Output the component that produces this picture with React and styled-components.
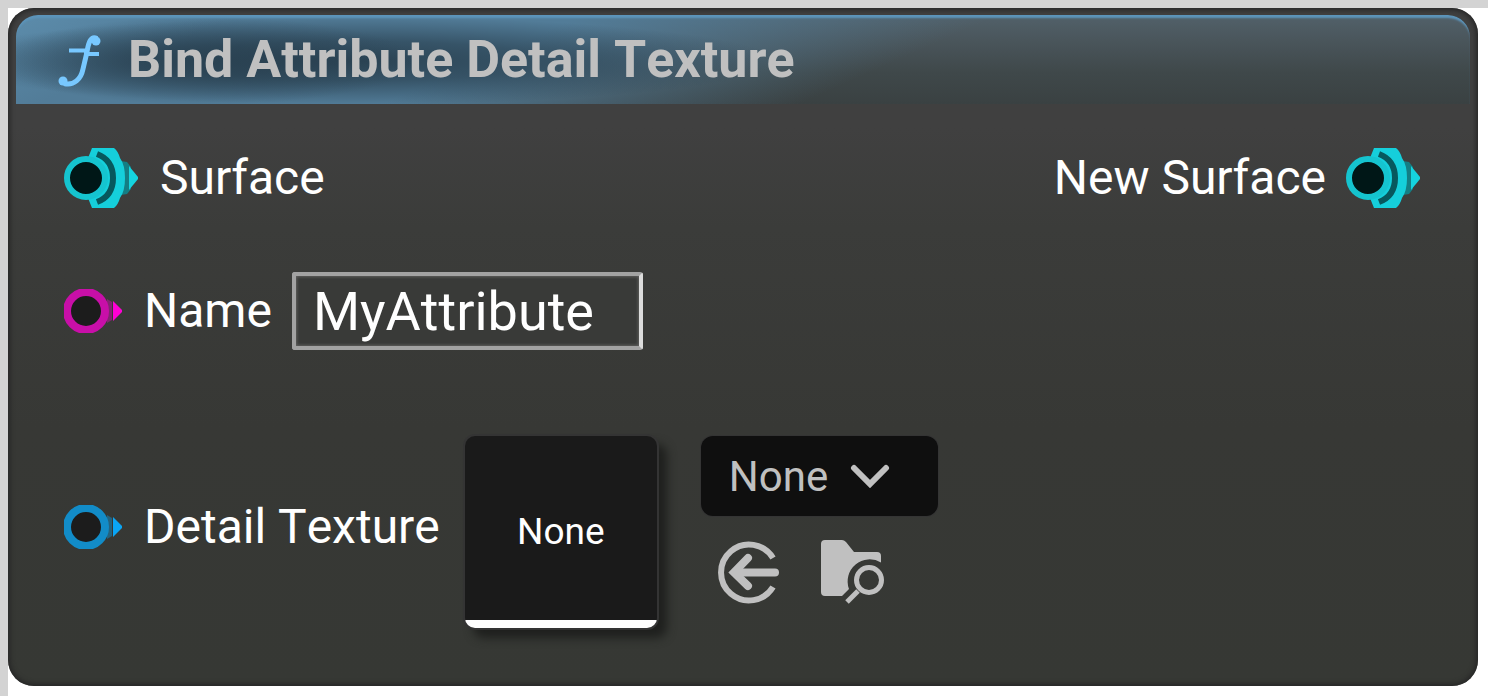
import React from "react";
import styled, { createGlobalStyle } from "styled-components";

const Global = createGlobalStyle`
  *, *::before, *::after { box-sizing: border-box; }
  body {
    margin: 0;
    background: #fff;
    font-family: Roboto, "Liberation Sans", sans-serif;
    font-kerning: none;
    color: #fff;
  }
`;

const Canvas = styled.main`
  min-height: 100vh;
  padding: 0 10px 10px 0;
  border-top: 8px solid #d3d3d3;
  border-left: 8px solid #d3d3d3;
`;

const Node = styled.section`
  padding: 7px 8px 0;
  border-radius: 26px;
  background: linear-gradient(#404040 0, #404040 120px, #3b3c3a 220px, #373835 420px, #363834 100%);
  box-shadow: inset 0 0 5px 2px #262626;
`;

const Header = styled.header`
  display: flex;
  align-items: center;
  gap: 26px;
  height: 89px;
  padding: 0 40px;
  border-radius: 22px 22px 0 0;
  box-shadow: inset 0 4px 2px -1px #5c94ba;
  background:
    radial-gradient(ellipse 210px 44px at 190px 46px, #263c4bb0 0, #263c4b90 35%, #263c4b00 100%),
    radial-gradient(ellipse 420px 44px at 340px 46px, #263c4be0 0, #263c4ba0 45%, #263c4b00 100%),
    linear-gradient(156deg, #5c8cab 0, #527c98 90px, #527c98 230px, #527c9800 400px),
    linear-gradient(#52616a 0, #485358 35%, #3f484a 65%, #3a4142 100%);
`;

const Title = styled.h1`
  margin: 0;
  font-size: 52px;
  line-height: 64px;
  font-weight: 700;
  color: #c0c0c0;
  white-space: nowrap;
`;

const Body = styled.div`
  display: flex;
  flex-direction: column;
  padding: 44px 48px 58px;
`;

const Row = styled.div`
  display: flex;
  align-items: center;
  justify-content: space-between;
  margin-top: ${(p) => p.$space || 0}px;
`;

const Port = styled.div`
  display: flex;
  align-items: center;
  gap: 20px;
`;

const Label = styled.label`
  font-size: 48px;
  line-height: 60px;
  white-space: nowrap;
`;

const PinSvg = styled.svg`
  display: block;
  flex: none;
`;

const NameInput = styled.input`
  width: 351px;
  height: 78px;
  padding: 0 17px;
  border: 4px solid #a2a2a2;
  border-right-color: #dcdcdc;
  border-radius: 3px;
  outline: 0;
  background: #393a38;
  box-shadow: inset 0 0 3px 1px #60605f;
  color: #fff;
  font: 400 54px/64px Roboto, sans-serif;
  font-kerning: none;
`;

const Asset = styled.div`
  display: flex;
  align-items: flex-start;
  gap: 44px;
  padding-top: 10px;
  margin-left: 5px;
`;

const Thumbnail = styled.div`
  display: grid;
  place-items: center;
  width: 192px;
  height: 192px;
  border-radius: 10px;
  background: linear-gradient(#1a1a1a 184px, #fff 184px);
  box-shadow: 0 0 0 2px #343434, 9px 9px 10px 1px #1f201e;
  font-size: 37px;
  line-height: 44px;
`;

const Controls = styled.div`
  display: flex;
  flex-direction: column;
  gap: 24px;
`;

const Picker = styled.div`
  display: grid;
  align-items: center;
  width: 237px;
`;

const Select = styled.select`
  grid-area: 1 / 1;
  appearance: none;
  width: 100%;
  height: 80px;
  padding: 2px 28px 0;
  border: 0;
  border-radius: 12px;
  background: #0f0f0f;
  box-shadow: 0 0 0 1px #343434;
  color: #c0c0c0;
  font: 400 42px/50px Roboto, sans-serif;
  font-kerning: none;
`;

const Chevron = styled.svg`
  grid-area: 1 / 1;
  justify-self: end;
  margin-right: 48px;
  pointer-events: none;
`;

const Actions = styled.div`
  display: flex;
  gap: 39px;
  padding-left: 16px;
`;

const IconButton = styled.button`
  display: block;
  width: 64px;
  height: 66px;
  padding: 0;
  border: 0;
  background: none;
  color: #c0c0c0;
`;

const FunctionIcon = () => (
  <svg width="46" height="54" viewBox="0 0 46 54" fill="none" stroke="#78c8ff" aria-hidden="true">
    <path d="M41 5.500C35 2.500 32.500 9 31 19L27 36C25 46 18 53 8 50.500" strokeWidth="5" />
    <path d="M13 17.500H31M28 21H43" strokeWidth="4" />
    <circle cx="40" cy="8" r="4.500" fill="#78c8ff" stroke="none" />
    <circle cx="7" cy="48" r="4.500" fill="#78c8ff" stroke="none" />
  </svg>
);

const StructPin = () => (
  <PinSvg width="76" height="60" viewBox="0 0 76 60" aria-hidden="true">
    <path d="M57 13L63 14L67 19V41L63 46L57 47Z" fill="#147e84" />
    <path d="M28 0H50Q54 3 56 10Q61 17 61 30Q61 43 56 50Q54 57 50 60H28L24 50V10Z" fill="#15cfdb" />
    <path d="M33 6Q49 12 49 30Q49 48 33 54" fill="none" stroke="#07585d" strokeWidth="6" />
    <circle cx="22" cy="30" r="19" fill="#001717" stroke="#15c4cf" strokeWidth="6" />
    <path d="M65 18L74 29V31L65 42Z" fill="#15d4df" />
  </PinSvg>
);

const Pin = ({ color, tip }) => (
  <PinSvg width="60" height="44" viewBox="0 0 60 44" aria-hidden="true">
    <circle cx="22" cy="22" r="19" fill="#1c1c1c" stroke={color} strokeWidth="8" />
    <path d="M43 10L48 13V31L43 34Z" fill={color} opacity="0.5" />
    <path d="M49 12L58 21V23L49 32Z" fill={tip} />
  </PinSvg>
);

export default function App() {
  return (
    <>
      <Global />
      <Canvas>
        <Node>
          <Header>
            <FunctionIcon />
            <Title>Bind Attribute Detail Texture</Title>
          </Header>
          <Body>
            <Row>
              <Port>
                <StructPin />
                <Label as="span">Surface</Label>
              </Port>
              <Port>
                <Label as="span">New Surface</Label>
                <StructPin />
              </Port>
            </Row>
            <Row $space={64}>
              <Port>
                <Pin color="#c80fa8" tip="#ff00d4" />
                <Label htmlFor="name">Name</Label>
                <NameInput id="name" defaultValue="MyAttribute" spellCheck={false} />
              </Port>
            </Row>
            <Row $space={76}>
              <Port>
                <Pin color="#128cc8" tip="#0aa5f5" />
                <Label htmlFor="texture">Detail Texture</Label>
                <Asset>
                  <Thumbnail>None</Thumbnail>
                  <Controls>
                    <Picker>
                      <Select id="texture">
                        <option>None</option>
                      </Select>
                      <Chevron width="40" height="24" viewBox="0 0 40 24" fill="none" stroke="#c0c0c0" strokeWidth="6" strokeLinecap="round" aria-hidden="true">
                        <path d="M4 4L20 20L36 4" />
                      </Chevron>
                    </Picker>
                    <Actions>
                      <IconButton type="button" aria-label="Use selected asset">
                        <svg width="64" height="66" viewBox="0 0 64 66" fill="none" stroke="currentColor" aria-hidden="true">
                          <path d="M56 18A28 28 0 1 0 56 47" strokeWidth="6" />
                          <path d="M58 32.500H18" strokeWidth="8" strokeLinecap="round" />
                          <path d="M31 18L17 32.500L31 46" strokeWidth="8" strokeLinecap="round" />
                        </svg>
                      </IconButton>
                      <IconButton type="button" aria-label="Browse to asset">
                        <svg width="64" height="66" viewBox="0 0 64 66" aria-hidden="true">
                          <path d="M5 0H22Q24 0 26 2L34 12H57Q61 12 61 16V22.500A22 22 0 0 0 29 49L22 56H5Q1 56 1 52V4Q1 0 5 0Z" fill="currentColor" />
                          <circle cx="49" cy="40" r="12.500" fill="none" stroke="currentColor" strokeWidth="5" />
                          <path d="M38 51L27 62" stroke="currentColor" strokeWidth="5" />
                        </svg>
                      </IconButton>
                    </Actions>
                  </Controls>
                </Asset>
              </Port>
            </Row>
          </Body>
        </Node>
      </Canvas>
    </>
  );
}
